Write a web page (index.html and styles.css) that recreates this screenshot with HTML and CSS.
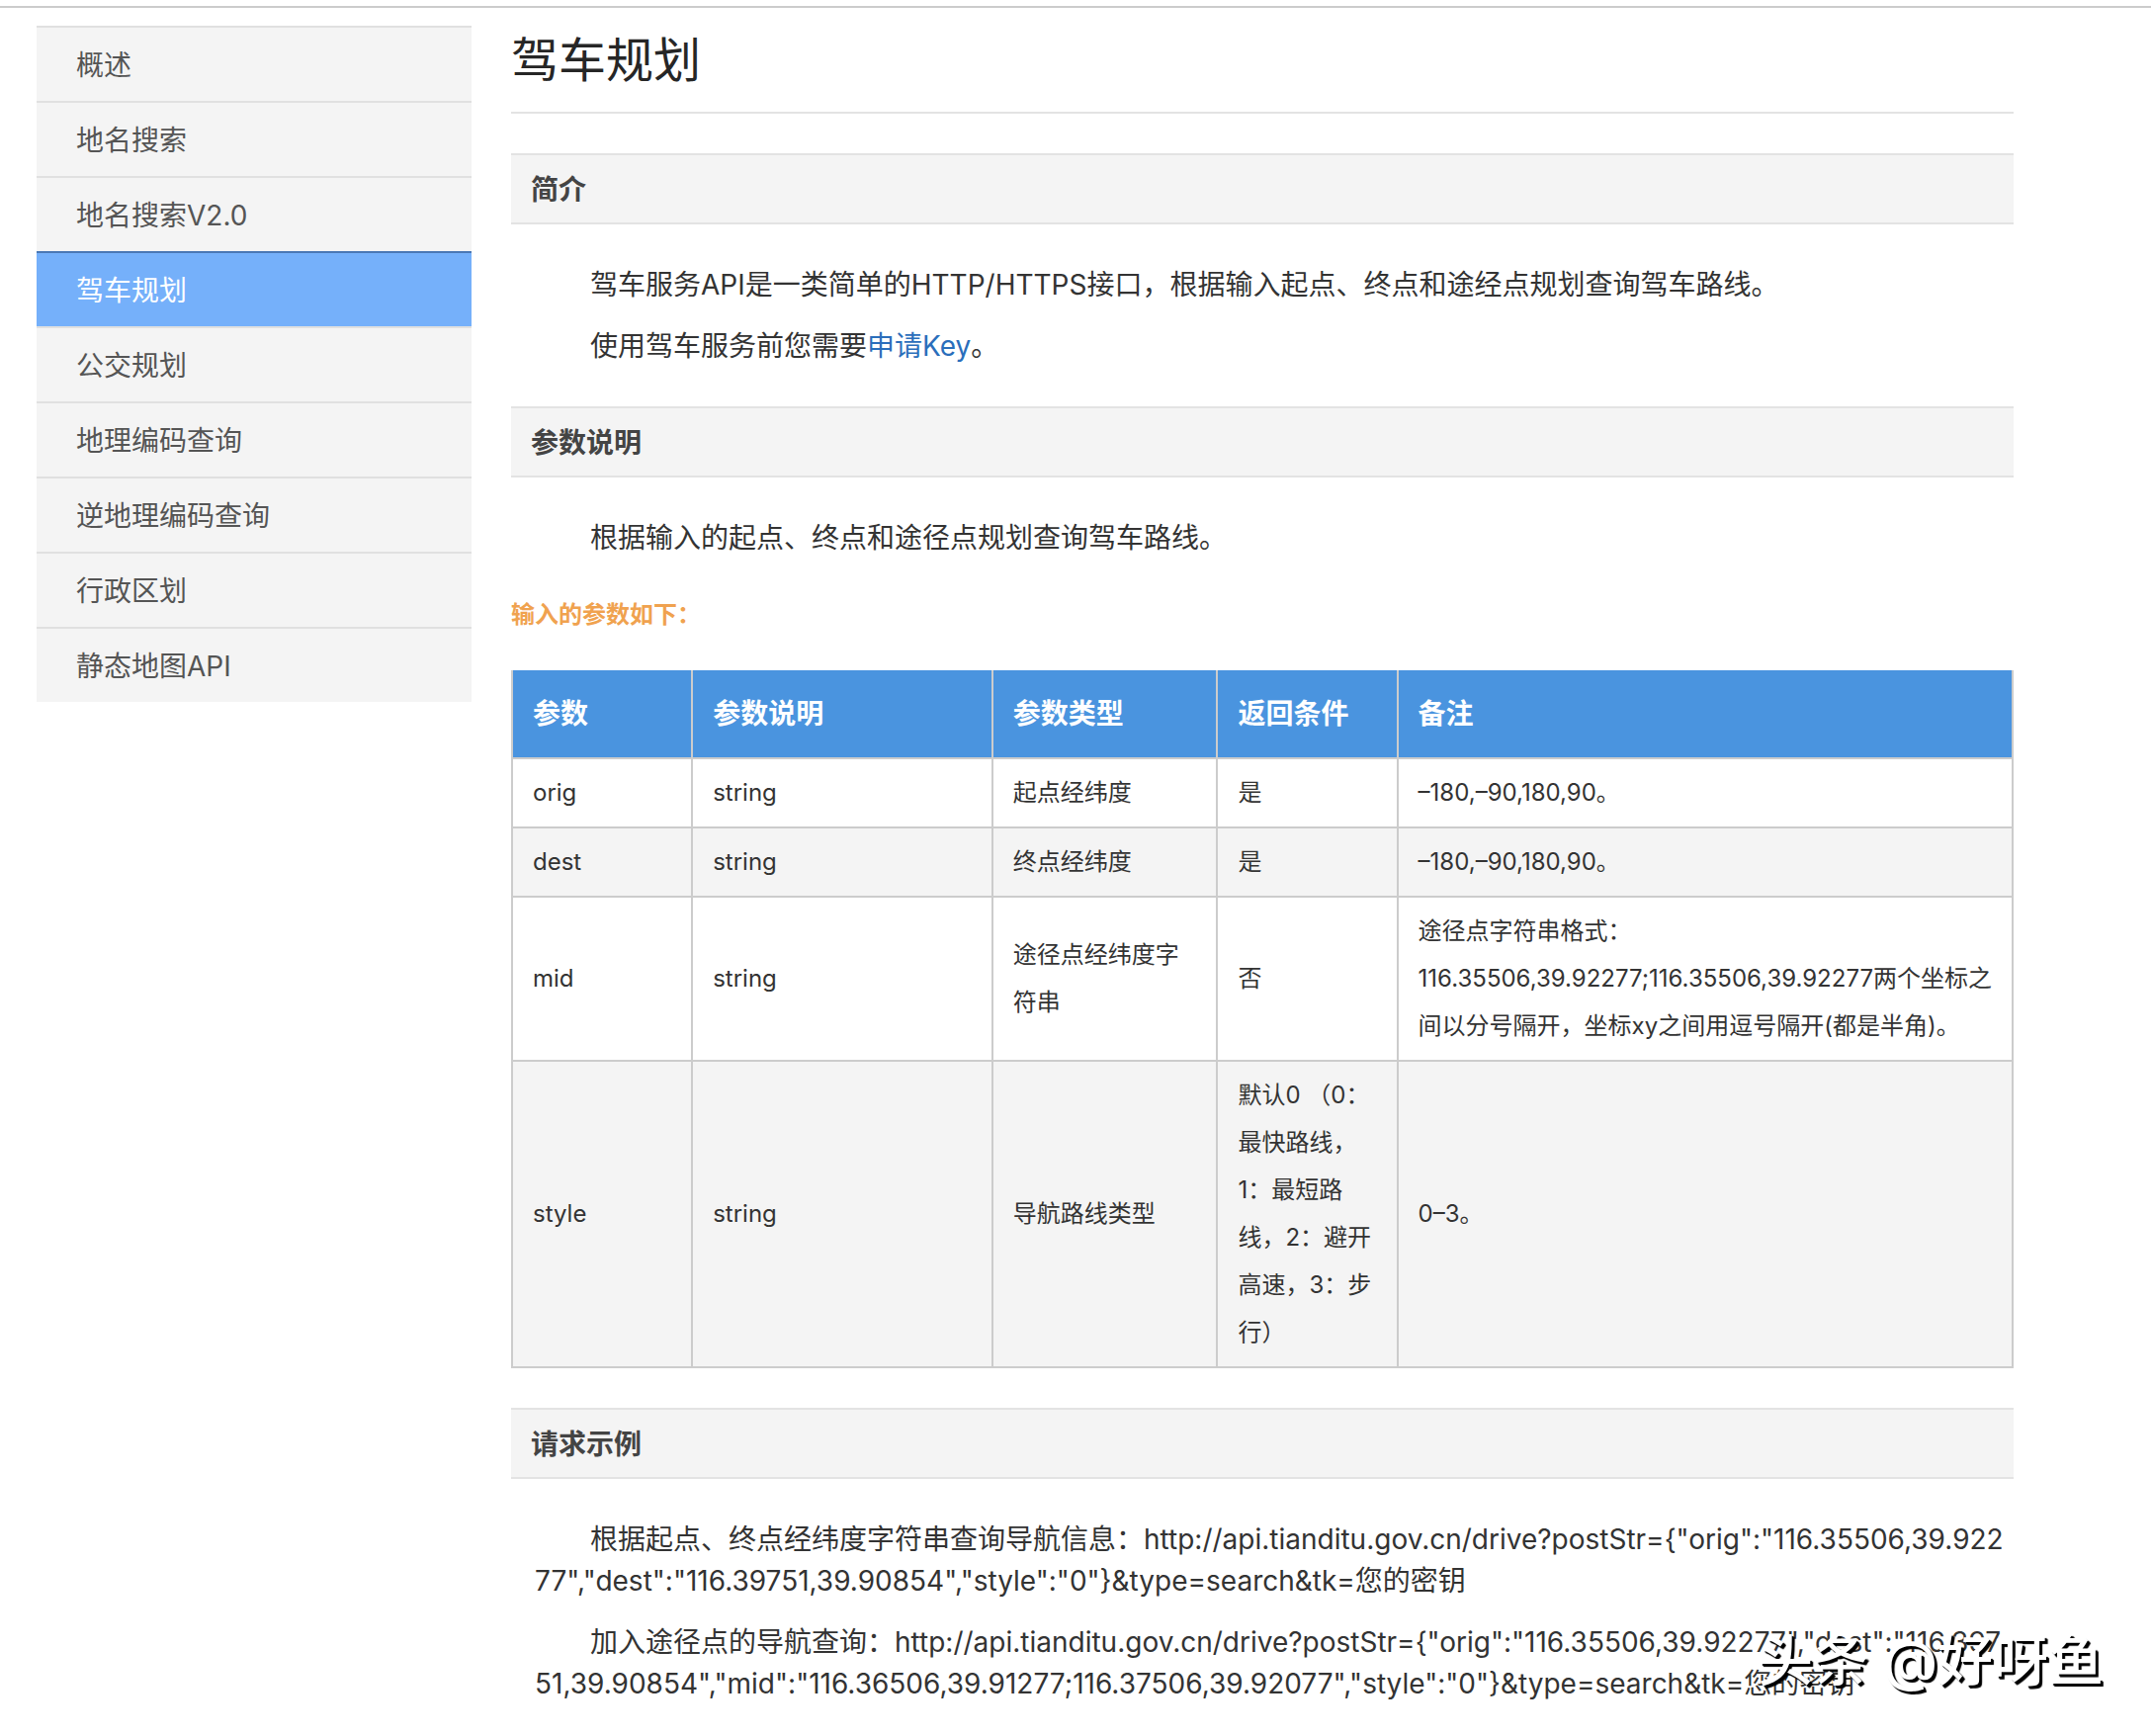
FILE: index.html
```html
<!DOCTYPE html>
<html lang="zh-CN">
<head>
  <meta charset="UTF-8">
  <meta name="viewport" content="width=device-width, initial-scale=1.0">
  <title>驾车规划</title>
  <link rel="stylesheet" href="styles.css">
</head>
<body>
  <div class="container">
    <!-- Side Menu -->
    <nav class="sidebar">
      <ul>
        <li><a href="#">概述</a></li>
        <li><a href="#">地名搜索</a></li>
        <li><a href="#">地名搜索V2.0</a></li>
        <li class="active"><a href="#">驾车规划</a></li>
        <li><a href="#">公交规划</a></li>
        <li><a href="#">地理编码查询</a></li>
        <li><a href="#">逆地理编码查询</a></li>
        <li><a href="#">行政区划</a></li>
        <li><a href="#">静态地图API</a></li>
      </ul>
    </nav>

    <!-- Content -->
    <main class="content">
      <h1>驾车规划</h1>

      <h2>简介</h2>
      <div class="text">
        <p>驾车服务API是一类简单的HTTP/HTTPS接口，根据输入起点、终点和途经点规划查询驾车路线。</p>
        <p>使用驾车服务前您需要<a href="#">申请Key</a>。</p>
      </div>

      <h2>参数说明</h2>
      <div class="text">
        <p>根据输入的起点、终点和途径点规划查询驾车路线。</p>
      </div>

      <h3>输入的参数如下：</h3>
      <table>
        <colgroup>
          <col class="col-name">
          <col class="col-desc">
          <col class="col-type">
          <col class="col-cond">
          <col class="col-note">
        </colgroup>
        <thead>
          <tr>
            <th>参数</th>
            <th>参数说明</th>
            <th>参数类型</th>
            <th>返回条件</th>
            <th>备注</th>
          </tr>
        </thead>
        <tbody>
          <tr>
            <td>orig</td>
            <td>string</td>
            <td>起点经纬度</td>
            <td>是</td>
            <td>–180,–90,180,90。</td>
          </tr>
          <tr>
            <td>dest</td>
            <td>string</td>
            <td>终点经纬度</td>
            <td>是</td>
            <td>–180,–90,180,90。</td>
          </tr>
          <tr>
            <td>mid</td>
            <td>string</td>
            <td>途径点经纬度字符串</td>
            <td>否</td>
            <td>途径点字符串格式：<br>116.35506,39.92277;116.35506,39.92277两个坐标之间以分号隔开，坐标xy之间用逗号隔开(都是半角)。</td>
          </tr>
          <tr>
            <td>style</td>
            <td>string</td>
            <td>导航路线类型</td>
            <td>默认0 （0：最快路线，1：最短路线，2：避开高速，3：步行）</td>
            <td>0–3。</td>
          </tr>
        </tbody>
      </table>

      <h2>请求示例</h2>
      <div class="text">
        <p>根据起点、终点经纬度字符串查询导航信息：http://api.tianditu.gov.cn/drive?postStr={"orig":"116.35506,39.92277","dest":"116.39751,39.90854","style":"0"}&amp;type=search&amp;tk=您的密钥</p>
        <p>加入途径点的导航查询：http://api.tianditu.gov.cn/drive?postStr={"orig":"116.35506,39.92277","dest":"116.39751,39.90854","mid":"116.36506,39.91277;116.37506,39.92077","style":"0"}&amp;type=search&amp;tk=您的密钥</p>
      </div>
    </main>
  </div>

  <div class="watermark">头条 @好呀鱼</div>
</body>
</html>
```

FILE: styles.css
```css
/* General Styles */
* {
  box-sizing: border-box;
}

body {
  position: relative;
  margin: 0;
  padding-top: 6px;
  min-height: 100vh;
  background-color: #fff;
  color: #333;
  font-family: Inter, "Noto Sans CJK SC", sans-serif;
  font-size: 28px;
  line-height: 42px;
}

a {
  color: #2a6ebb;
  text-decoration: none;
}

.container {
  display: flex;
  align-items: flex-start;
  gap: 40px;
  padding: 18px 139px 0 37px;
  border-top: 2px solid #ccc;
}

/* Side Menu */
.sidebar {
  flex: 0 0 440px;
}

.sidebar ul {
  list-style: none;
  margin: 0;
  padding: 0;
}

.sidebar li {
  background-color: #f4f4f4;
  border-top: 2px solid #e0e0e0;
}

.sidebar a {
  display: block;
  padding: 17px 40px 15px;
  color: #555;
}

.sidebar .active {
  background-color: #75b0fa;
  border-top-color: #4a78b5;
}

.sidebar .active a {
  color: #fff;
}

/* Content */
.content {
  flex: 1;
  min-width: 0;
}

h1 {
  margin: 0 0 40px;
  padding-bottom: 17px;
  border-bottom: 2px solid #e3e3e3;
  color: #262626;
  font-size: 48px;
  font-weight: normal;
  line-height: 70px;
}

h2 {
  margin: 40px 0;
  padding: 14px 20px 12px;
  background-color: #f4f4f4;
  border-top: 2px solid #e3e3e3;
  border-bottom: 2px solid #e3e3e3;
  color: #444;
  font-size: 28px;
  line-height: 42px;
}

.text {
  padding: 0 8px 0 24px;
}

.text p {
  margin: 20px 0;
  text-indent: 2em;
  word-break: break-all;
}

h3 {
  margin: 40px 0;
  color: #f0a24f;
  font-size: 24px;
  line-height: 33px;
}

/* Parameter Table */
table {
  width: 100%;
  border-collapse: collapse;
  table-layout: fixed;
}

th,
td {
  border: 2px solid #ccc;
  text-align: left;
}

th {
  padding: 23px 20px;
  background-color: #4a94df;
  border-top: none;
  color: #fff;
}

td {
  padding: 10px 20px;
  font-size: 24px;
  line-height: 48px;
}

tbody tr:nth-child(even) {
  background-color: #f4f4f4;
}

.col-name,
.col-cond {
  width: 12%;
}

.col-desc {
  width: 20%;
}

.col-type {
  width: 15%;
}

/* Watermark */
.watermark {
  position: absolute;
  right: 48px;
  bottom: 40px;
  color: #fff;
  font-size: 56px;
  font-weight: 500;
  line-height: 72px;
  text-shadow: 2px 2px 1px #000, 3px 3px 1px #000;
}
```
